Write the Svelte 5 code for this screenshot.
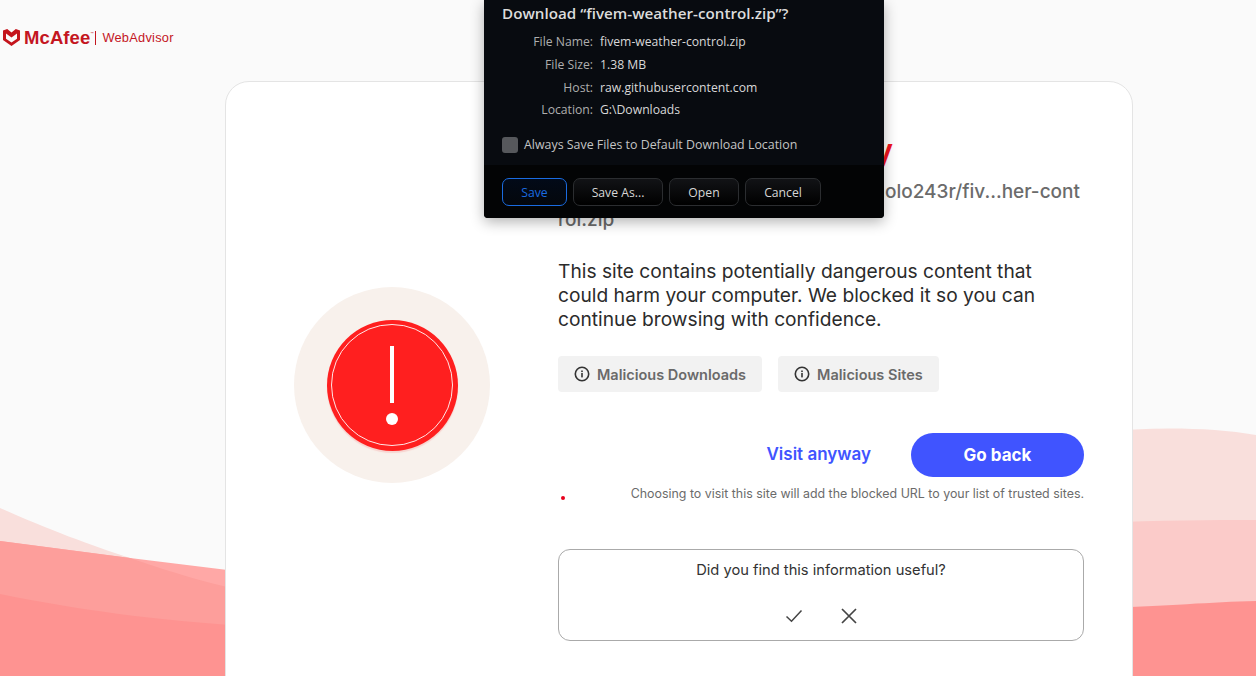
<script lang="ts">
	const details = [
		['File Name:', 'fivem-weather-control.zip'],
		['File Size:', '1.38 MB'],
		['Host:', 'raw.githubusercontent.com'],
		['Location:', 'G:\\Downloads']
	];
	const buttons = ['Save As...', 'Open', 'Cancel'];
	const tags = ['Malicious Downloads', 'Malicious Sites'];
</script>

<div class="page">
	<svg class="waves" viewBox="0 0 1256 676" width="1256" height="676" aria-hidden="true">
		<path fill="#f9dfdc" d="M0 508C50 530 90 545 130 558C165 570 195 580 260 595V676H0Z" />
		<path fill="#ffa8a6" d="M0 541L130 558L260 574V676H0Z" />
		<path fill="#fd9e9b" d="M0 541L130 558C165 570 195 580 260 595V676H0Z" />
		<path fill="#fe9391" d="M0 594C80 610 150 620 260 627V676H0Z" />
		<path fill="#f9dfdc" d="M1100 432C1150 427 1210 427 1256 435V676H1100Z" />
		<path fill="#fbcbc9" d="M1100 523C1160 520 1210 520 1256 520V676H1100Z" />
		<path fill="#fe9391" d="M1100 608C1170 606 1210 602 1256 601V676H1100Z" />
	</svg>

	<header class="logo">
		<svg class="shield" viewBox="0 0 17 17" width="17" height="17" aria-hidden="true">
			<path fill="#c4141c" d="M0 1.5L4.2 0L8.5 3.4L12.8 0L17 1.5V11L8.5 17L0 11ZM3 4.6V9.7L8.5 13.4L14 9.7V4.6L8.5 8.6Z" />
		</svg>
		<span class="brand">McAfee</span>
		<span class="tm">™</span>
		<span class="sep"></span>
		<span class="product">WebAdvisor</span>
	</header>

	<main class="card">
		<div class="icon-col">
			<div class="halo">
				<div class="alert">
					<div class="alert-inner">
						<span class="bar"></span>
						<span class="dot"></span>
					</div>
				</div>
			</div>
		</div>

		<section class="content">
			<h1><span>This site is risky</span></h1>
			<div class="url">
				<div class="url-first">https://raw.githubusercontent.com/holo243r/fiv...her-cont</div>
				<div>rol.zip</div>
			</div>
			<p class="desc">This site contains potentially dangerous content that could harm your computer. We blocked it so you can continue browsing with confidence.</p>

			<div class="tags">
				{#each tags as tag}
					<span class="tag">
						<svg viewBox="0 0 16 16" width="16" height="16" aria-hidden="true">
							<circle cx="8" cy="8" r="6.7" fill="none" stroke="#333" stroke-width="1.6" />
							<rect x="7.2" y="7" width="1.6" height="4.4" fill="#333" />
							<rect x="7.2" y="4.5" width="1.6" height="1.6" fill="#333" />
						</svg>
						{tag}
					</span>
				{/each}
			</div>

			<div class="actions">
				<a class="visit" href="#visit">Visit anyway</a>
				<button class="back">Go back</button>
			</div>

			<div class="note">
				<span class="red-dot"></span>
				<span>Choosing to visit this site will add the blocked URL to your list of trusted sites.</span>
			</div>

			<div class="feedback">
				<div class="question">Did you find this information useful?</div>
				<div class="answers">
					<svg viewBox="0 0 18 14" width="18" height="14" aria-hidden="true">
						<path d="M1.5 7.5L6.5 12.2L16.5 1.5" fill="none" stroke="#444" stroke-width="1.5" />
					</svg>
					<svg viewBox="0 0 16 16" width="16" height="16" aria-hidden="true">
						<path d="M1 1L15 15M15 1L1 15" fill="none" stroke="#444" stroke-width="1.7" />
					</svg>
				</div>
			</div>
		</section>
	</main>

	<div class="dialog">
		<div class="dialog-body">
			<div class="dialog-title">Download “fivem-weather-control.zip”?</div>
			<div class="rows">
				{#each details as [label, value]}
					<span class="label">{label}</span>
					<span class="value">{value}</span>
				{/each}
			</div>
			<label class="always">
				<span class="box"></span>
				Always Save Files to Default Download Location
			</label>
		</div>
		<div class="dialog-foot">
			<button class="dlg-btn primary">Save</button>
			{#each buttons as b}
				<button class="dlg-btn">{b}</button>
			{/each}
		</div>
	</div>
</div>

<style>
	:global(body) {
		margin: 0;
		background: #fafafa;
	}
	.page {
		position: relative;
		width: 1256px;
		height: 676px;
		overflow: hidden;
		background: #fafafa;
		font-family: Inter, "Open Sans", sans-serif;
	}
	.waves {
		position: absolute;
		left: 0;
		top: 0;
	}
	.logo {
		position: relative;
		display: flex;
		align-items: center;
		height: 81px;
		padding: 0 0 6px 3px;
		box-sizing: border-box;
		color: #c4161f;
	}
	.shield {
		margin-right: 4px;
	}
	.brand {
		font-family: "Liberation Sans", sans-serif;
		font-weight: 700;
		font-size: 18.5px;
		letter-spacing: 0.1px;
	}
	.tm {
		font-size: 5px;
		margin-top: -8px;
		width: 5px;
	}
	.sep {
		width: 1px;
		height: 14px;
		background: #c4161f;
		margin: 0 6px 0 0;
	}
	.product {
		font-family: "Liberation Sans", sans-serif;
		font-size: 12.8px;
		letter-spacing: 0.25px;
	}
	.card {
		position: relative;
		display: flex;
		box-sizing: border-box;
		width: 908px;
		height: 640px;
		margin-left: 225px;
		background: #fff;
		border: 1px solid #e4e4e4;
		border-radius: 24px;
	}
	.icon-col {
		width: 332px;
		padding: 205px 0 0 68px;
		box-sizing: border-box;
	}
	.halo {
		display: flex;
		align-items: center;
		justify-content: center;
		width: 196px;
		height: 196px;
		border-radius: 50%;
		background: #f8f1ec;
	}
	.alert {
		display: flex;
		align-items: center;
		justify-content: center;
		width: 131px;
		height: 131px;
		border-radius: 50%;
		background: #ff1f1f;
		box-shadow: 0 2px 1px #f7d4d0;
	}
	.alert-inner {
		display: flex;
		flex-direction: column;
		align-items: center;
		box-sizing: border-box;
		width: 122px;
		height: 122px;
		padding-top: 21px;
		border: 1px solid #ffe6e6;
		border-radius: 50%;
	}
	.bar {
		width: 4px;
		height: 57px;
		background: #fff;
	}
	.dot {
		width: 12px;
		height: 12px;
		margin-top: 10px;
		border-radius: 50%;
		background: #fff;
	}
	.content {
		width: 526px;
		padding-top: 48px;
	}
	h1 {
		display: flex;
		justify-content: flex-end;
		width: 335px;
		margin: 0;
		height: 42px;
		font-size: 32px;
		line-height: 42px;
		font-weight: 600;
		color: #f0141e;
		white-space: nowrap;
	}
	.url {
		margin-top: 6px;
		font-size: 19px;
		line-height: 28px;
		font-weight: 500;
		color: #6b6b6b;
	}
	.url-first {
		display: flex;
		justify-content: flex-end;
		width: 522px;
		white-space: nowrap;
	}
	.desc {
		margin: 25px 0 0;
		max-width: 500px;
		font-size: 19.2px;
		line-height: 24px;
		color: #2b2b2b;
	}
	.tags {
		display: flex;
		gap: 16px;
		margin-top: 25px;
	}
	.tag {
		display: flex;
		align-items: center;
		gap: 7px;
		height: 36px;
		padding: 0 16px;
		border-radius: 4px;
		background: #f2f2f2;
		font-size: 14.5px;
		font-weight: 600;
		color: #6a6a6a;
	}
	.actions {
		display: flex;
		justify-content: flex-end;
		align-items: center;
		gap: 40px;
		margin-top: 41px;
	}
	.visit {
		margin-top: -2px;
		font-size: 17px;
		font-weight: 600;
		color: #4054ff;
		text-decoration: none;
	}
	.back {
		width: 173px;
		height: 44px;
		border: 0;
		border-radius: 22px;
		background: #4054ff;
		color: #fff;
		font: 700 17px Inter, sans-serif;
	}
	.note {
		display: flex;
		justify-content: space-between;
		margin-top: 8px;
		height: 17px;
		font-size: 12.4px;
		line-height: 17px;
		color: #6b6b6b;
	}
	.red-dot {
		width: 4px;
		height: 4px;
		margin: 11px 0 0 3px;
		border-radius: 50%;
		background: #e8001c;
	}
	.feedback {
		box-sizing: border-box;
		height: 92px;
		margin-top: 47px;
		border: 1px solid #aaa;
		border-radius: 12px;
		text-align: center;
	}
	.question {
		margin-top: 10px;
		font-size: 14.7px;
		line-height: 20px;
		color: #333;
	}
	.answers {
		display: flex;
		justify-content: center;
		align-items: center;
		gap: 38px;
		margin-top: 28px;
	}
	.dialog {
		position: absolute;
		left: 484px;
		top: 0;
		width: 400px;
		height: 218px;
		display: flex;
		flex-direction: column;
		border-radius: 0 0 4px 4px;
		background: #080b10;
		box-shadow: 0 4px 14px rgba(0, 0, 0, 0.3);
		font-family: "Open Sans", "Noto Sans", sans-serif;
		color: #c9c9c9;
	}
	.dialog-body {
		height: 165px;
		padding: 3px 18px 0;
		box-sizing: border-box;
	}
	.dialog-title {
		font-size: 15.2px;
		line-height: 20px;
		font-weight: 600;
		color: #dcdcdc;
	}
	.rows {
		display: grid;
		grid-template-columns: 91px 1fr;
		column-gap: 7px;
		margin-top: 8px;
		font-size: 12.2px;
		line-height: 22.8px;
	}
	.label {
		text-align: right;
		color: #aeaeae;
	}
	.value {
		color: #d8d8d8;
	}
	.always {
		display: flex;
		align-items: center;
		gap: 6px;
		margin-top: 15px;
		font-size: 12.4px;
		line-height: 16px;
		color: #c4c4c4;
	}
	.box {
		width: 16px;
		height: 16px;
		border-radius: 3px;
		background: #56585c;
	}
	.dialog-foot {
		flex: 1;
		display: flex;
		align-items: flex-start;
		gap: 6px;
		padding: 13px 18px 0;
		background: #030405;
		border-radius: 0 0 4px 4px;
	}
	.dlg-btn {
		box-sizing: border-box;
		height: 28px;
		padding: 0;
		width: 70px;
		border: 1px solid #2b2d30;
		border-radius: 7px;
		background: linear-gradient(#121316, #000);
		color: #d6d6d6;
		font: 12.2px "Open Sans", sans-serif;
	}
	.dlg-btn:nth-child(1) {
		width: 65px;
		border-color: #1a6be0;
		color: #1a6be0;
		background: linear-gradient(#020a18, #04070c);
	}
	.dlg-btn:nth-child(2) {
		width: 90px;
	}
	.dlg-btn:nth-child(4) {
		width: 76px;
	}
</style>
